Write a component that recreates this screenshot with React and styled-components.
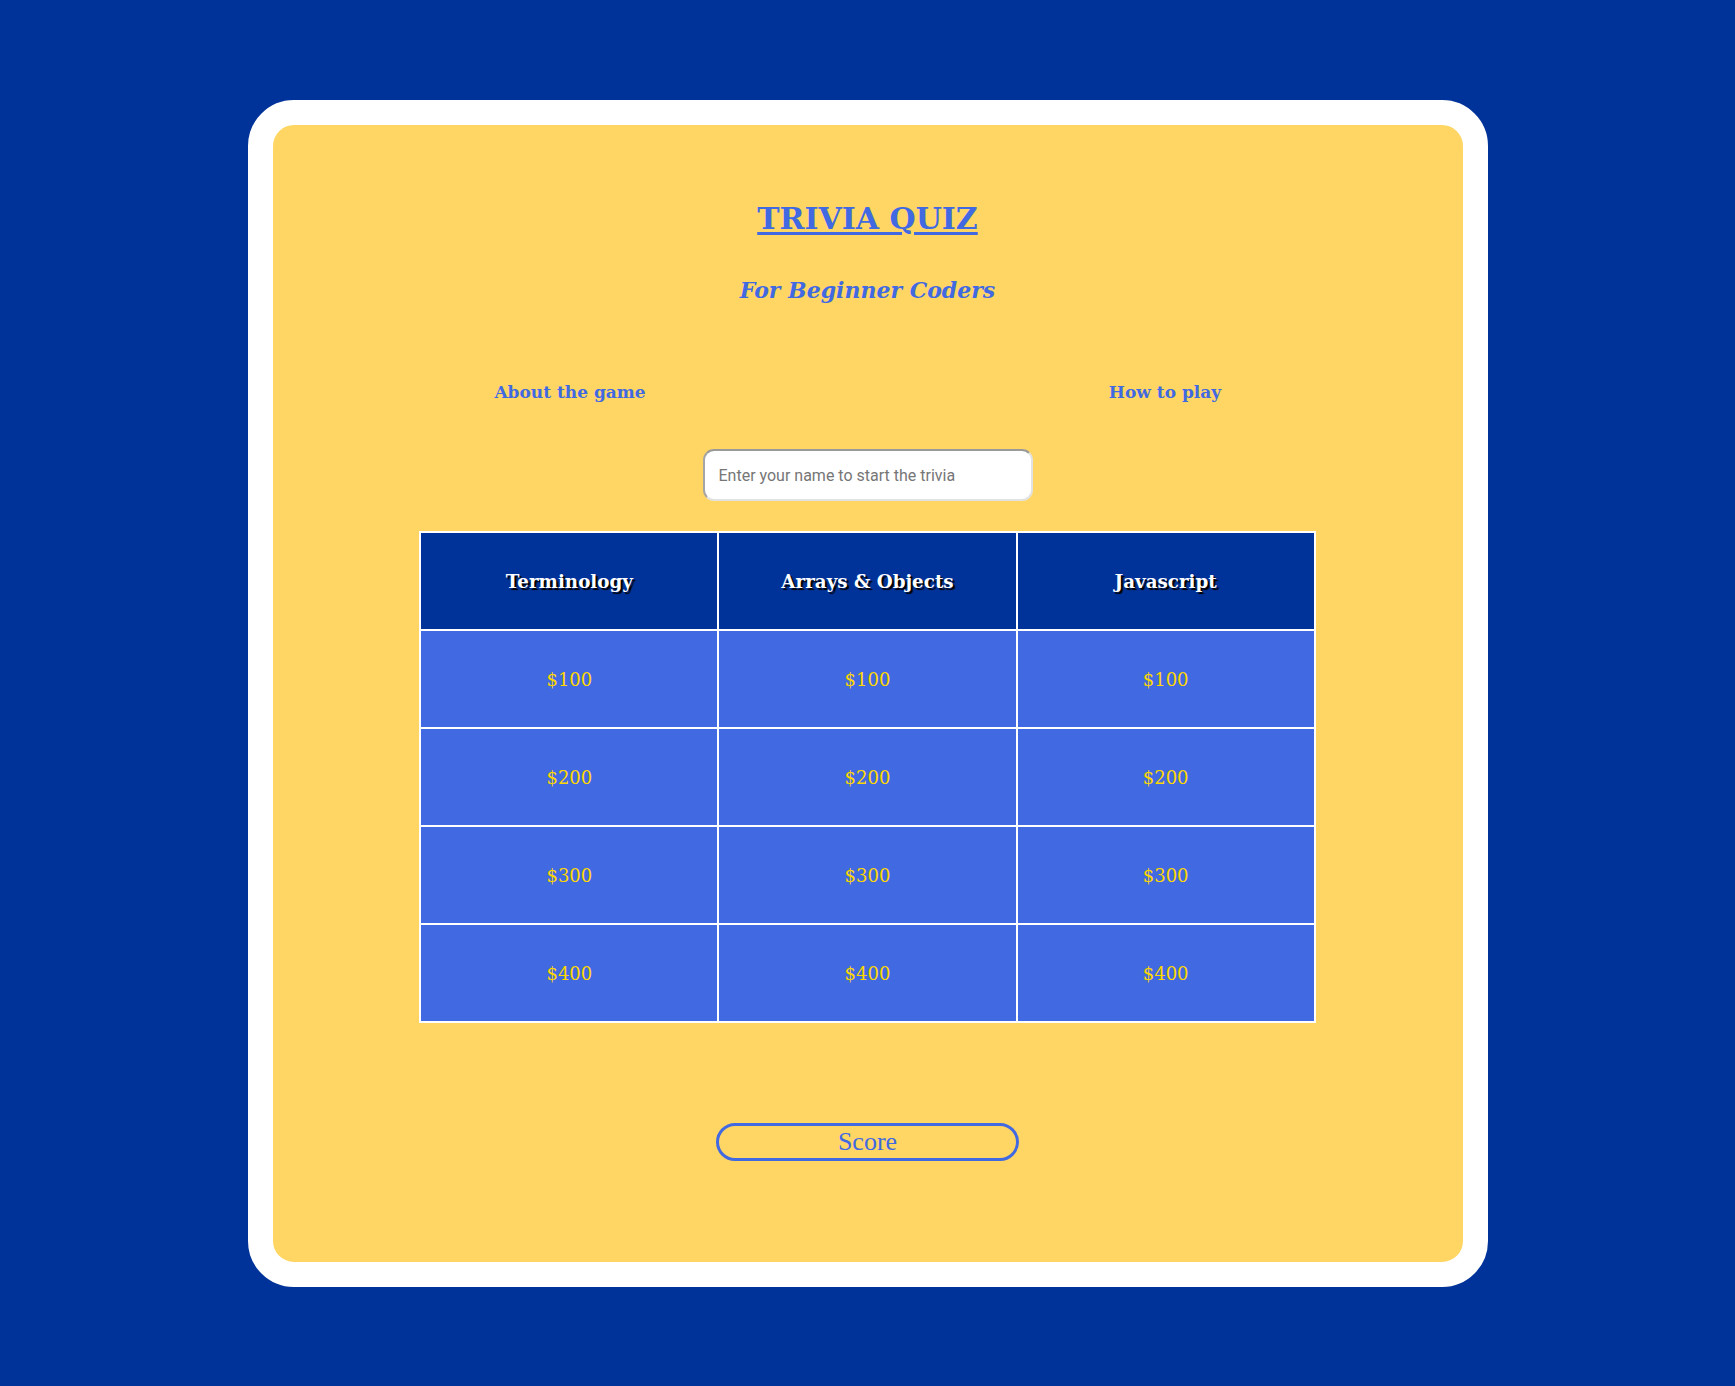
import React from "react";
import styled, { createGlobalStyle } from "styled-components";

const GlobalStyle = createGlobalStyle`
  body {
    margin: 0;
    background-color: #003399;
    font-family: "DejaVu Serif", "Liberation Serif", serif;
  }
`;

const Card = styled.main`
  box-sizing: border-box;
  width: 1240px;
  margin: 100px auto;
  padding: 74px 0 101px;
  border: 25px solid #fff;
  border-radius: 46px;
  background-color: #ffd664;
  display: flex;
  flex-direction: column;
  align-items: center;
`;

const Title = styled.h1`
  margin: 0;
  font-size: 30px;
  line-height: 40px;
  font-weight: bold;
  color: #4169e1;
  text-decoration: underline;
  text-decoration-thickness: 3px;
  text-underline-offset: 3px;
`;

const Subtitle = styled.h2`
  margin: 36px 0 0;
  font-size: 22px;
  line-height: 30px;
  font-weight: bold;
  font-style: italic;
  color: #4169e1;
`;

const Links = styled.nav`
  margin-top: 75px;
  width: 100%;
  display: grid;
  grid-template-columns: 1fr 1fr;
`;

const InfoLink = styled.a`
  justify-self: center;
  font-size: 17px;
  line-height: 24px;
  font-weight: bold;
  color: #4169e1;
  text-decoration: none;
  cursor: pointer;
`;

const NameInput = styled.input`
  box-sizing: border-box;
  margin-top: 45px;
  width: 330px;
  height: 52px;
  padding: 0 14px;
  border: 2px solid #e2e2e2;
  border-top-color: #9a9a9a;
  border-left-color: #a5a5a5;
  border-radius: 11px;
  background: #fff;
  font-family: Roboto, "Liberation Sans", sans-serif;
  font-size: 16px;
  color: #333;
  outline: none;

  &::placeholder {
    color: #767676;
  }
`;

const Board = styled.div`
  margin-top: 30px;
  width: 75%;
  display: grid;
  grid-template-columns: repeat(3, 1fr);
  gap: 2px;
  border: 2px solid #fff;
  background-color: #fff;
`;

const Cell = styled.div`
  height: 96px;
  display: flex;
  align-items: center;
  justify-content: center;
  font-size: ${(p) => (p.$header ? "18.3px" : "18px")};
  background-color: ${(p) => (p.$header ? "#003399" : "#4169e1")};
  color: ${(p) => (p.$header ? "#fff" : "#ffd700")};
  font-weight: ${(p) => (p.$header ? "bold" : "normal")};
  text-shadow: ${(p) => (p.$header ? "2px 2px 1px #000" : "none")};
  cursor: ${(p) => (p.$header ? "default" : "pointer")};
`;

const ScoreButton = styled.button`
  box-sizing: border-box;
  margin-top: 100px;
  width: 303px;
  height: 38px;
  padding: 0;
  border: 3px solid #4169e1;
  border-radius: 20px;
  background: transparent;
  font-family: "Liberation Serif", serif;
  font-size: 26px;
  line-height: 30px;
  color: #4169e1;
  cursor: pointer;
`;

const categories = ["Terminology", "Arrays & Objects", "Javascript"];
const values = [100, 200, 300, 400];

const App = () => {
  return (
    <>
      <GlobalStyle />
      <Card>
        <Title>TRIVIA QUIZ</Title>
        <Subtitle>For Beginner Coders</Subtitle>

        <Links>
          <InfoLink>About the game</InfoLink>
          <InfoLink>How to play</InfoLink>
        </Links>

        <NameInput type="text" placeholder="Enter your name to start the trivia" />

        <Board>
          {categories.map((cat) => (
            <Cell key={cat} $header>
              {cat}
            </Cell>
          ))}
          {values.map((v) =>
            categories.map((cat) => <Cell key={cat + v}>${v}</Cell>)
          )}
        </Board>

        <ScoreButton>Score</ScoreButton>
      </Card>
    </>
  );
};

export default App;
